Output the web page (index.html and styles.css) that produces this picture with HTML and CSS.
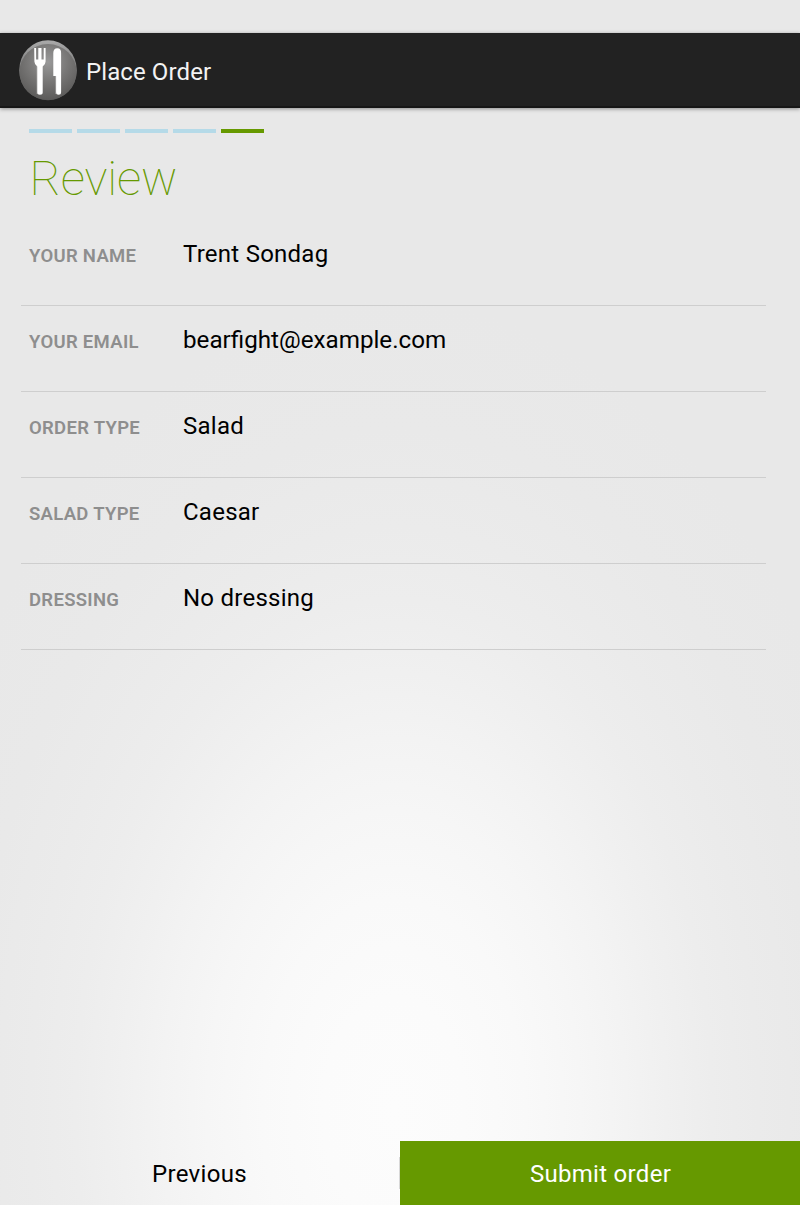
FILE: index.html
```html
<!DOCTYPE html>
<html lang="en">
<head>
<meta charset="utf-8">
<title>Place Order</title>
<link rel="stylesheet" href="styles.css">
</head>
<body>
<div class="screen">
  <header class="bar">
    <svg class="logo" width="60" height="62" viewBox="18 39 60 62" aria-hidden="true">
      <defs>
        <radialGradient id="disc" cx="50%" cy="32%" r="66%">
          <stop offset="0" stop-color="#999"/>
          <stop offset=".55" stop-color="#777675"/>
          <stop offset="1" stop-color="#5d5c5b"/>
        </radialGradient>
        <linearGradient id="rim" x1="0" y1="0" x2="0" y2="1">
          <stop offset="0" stop-color="#aaa"/>
          <stop offset=".5" stop-color="#777"/>
          <stop offset="1" stop-color="#555"/>
        </linearGradient>
      </defs>
      <ellipse cx="48" cy="70.2" rx="28.8" ry="30" fill="url(#rim)"/>
      <ellipse cx="48" cy="72" rx="28.5" ry="28" fill="url(#disc)"/>
      <path class="cutlery-shadow" d="M38.5 66v28M57 76v18"/>
      <path fill="#fff" d="M34.2 48h1.9v11.5h2.2V48h3.2v11.5h2.2V48h1.9v13.5q0 3.2-2.9 4.900V92.500q0 2.200-2.700 2.200t-2.700-2.200V66.400q-2.900-1.700-2.900-4.900z"/>
      <path fill="#fff" d="M53.300 76V53q0-4.800 4-4.800t3.800 4.800V92.200q0 2.500-2.500 2.500t-2.500-2.500V76z"/>
    </svg>
    <h1 class="bar-title">Place Order</h1>
  </header>
  <main class="content">
    <div class="steps"><i class="step"></i><i class="step"></i><i class="step"></i><i class="step"></i><i class="step current"></i></div>
    <h2 class="title">Review</h2>
    <dl class="review">
      <div class="row"><dt class="label">YOUR NAME</dt><dd class="value">Trent Sondag</dd></div>
      <div class="row"><dt class="label">YOUR EMAIL</dt><dd class="value email">bearfight@example.com</dd></div>
      <div class="row"><dt class="label">ORDER TYPE</dt><dd class="value">Salad</dd></div>
      <div class="row"><dt class="label">SALAD TYPE</dt><dd class="value">Caesar</dd></div>
      <div class="row"><dt class="label">DRESSING</dt><dd class="value">No dressing</dd></div>
    </dl>
  </main>
  <footer class="actions">
    <button class="btn previous">Previous</button>
    <button class="btn submit">Submit order</button>
  </footer>
</div>
</body>
</html>
```
FILE: styles.css
```css
* { box-sizing: border-box; }
body, h1, h2, dl, dd { margin: 0; }
body { font-family: Roboto, sans-serif; color: #000; }
.screen {
  height: 1205px;
  padding-top: 33px;
  display: flex;
  flex-direction: column;
  background: radial-gradient(ellipse 505px 810px at 394px 1110px, #fcfcfc 0%, #fbfbfb 14%, #f9f9f9 26%, #f6f6f6 37%, #f3f3f3 46%, #f0f0f0 54%, #ededed 63%, #ebebeb 72%, #e9e9e9 84%, #e8e8e8 100%);
}
.bar {
  flex: none;
  height: 75px;
  padding-left: 18px;
  display: flex;
  align-items: center;
  gap: 8px;
  background: #222;
  border-bottom: 2px solid #171717;
  box-shadow: 0 1px 4px rgba(0, 0, 0, .4);
}
.logo { display: block; }
.cutlery-shadow { stroke: rgba(255, 255, 255, .25); stroke-width: 4; fill: none; }
.bar-title { font-size: 24px; font-weight: 400; line-height: 32px; letter-spacing: .1px; color: #f3f3f3; padding-top: 4px; }
.content { flex: 1; padding: 21px 34px 0 21px; }
.steps { display: flex; gap: 5px; padding-left: 8px; }
.step { width: 43px; height: 4px; background: #b5dae8; }
.current { background: #690; }
.title { padding: 16px 0 0 8.5px; font-size: 48px; line-height: 60px; font-weight: 100; letter-spacing: -.15px; color: #690; }
.review { padding-top: 11px; }
.row {
  display: flex;
  align-items: baseline;
  height: 86px;
  padding: 18px 0 0 8px;
  border-bottom: 1px solid #cecece;
}
.label { width: 154px; font-size: 18.5px; font-weight: 600; letter-spacing: .3px; color: #8e8e8e; }
.value { font-size: 24px; line-height: 32px; letter-spacing: .25px; }
.email { letter-spacing: 0; font-size: 24.2px; }
.actions { flex: none; height: 64px; display: flex; }
.btn {
  width: 50%;
  border: 0;
  padding: 1px 1px 0 0;
  background: none;
  font: 24px/32px Roboto, sans-serif;
  letter-spacing: .3px;
  color: #000;
}
.previous { background: linear-gradient(#d8d8d8, #d8d8d8) right center / 1px 32px no-repeat; }
.submit { background: #690; color: #fff; padding: 1px 0 0 1px; }
```
